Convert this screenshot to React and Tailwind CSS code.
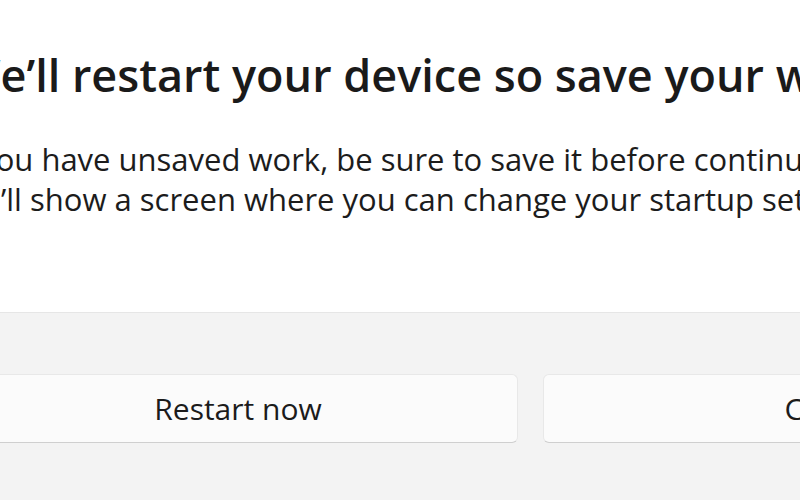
export default function App() {
  const font = { fontFamily: '"Open Sans", "Noto Sans", sans-serif' };
  return (
    <div className="w-[800px] h-[500px] overflow-hidden bg-white flex flex-col" style={font}>
      {/* Dialog body */}
      <div className="h-[312px] shrink-0 whitespace-nowrap -ml-[42px] pt-[44px]">
        <h1 className="text-[45px] leading-[62px] font-semibold text-[#1a1a1a]">
          We’ll restart your device so save your work
        </h1>
        <div className="mt-[33px] text-[31px] leading-[40px] text-[#1c1c1c]">
          <p className="-ml-[5px]">If you have unsaved work, be sure to save it before continuing.</p>
          <p className="-ml-[3px]">We’ll show a screen where you can change your startup settings.</p>
        </div>
      </div>

      {/* Footer with buttons */}
      <div className="flex-1 bg-[#f3f3f3] border-t border-[#e6e6e6] pt-[61px]">
        <div className="flex gap-[25px] -ml-[42px]">
          <button className="w-[560px] h-[69px] shrink-0 rounded-md bg-[#fbfbfb] border border-[#e8e8e8] border-b-[#cfcfcf] text-[30px] text-[#1b1b1b]">
            Restart now
          </button>
          <button className="w-[576px] h-[69px] shrink-0 rounded-md bg-[#fbfbfb] border border-[#e8e8e8] border-b-[#cfcfcf] text-[30px] text-[#1b1b1b]">
            Cancel
          </button>
        </div>
      </div>
    </div>
  );
}
